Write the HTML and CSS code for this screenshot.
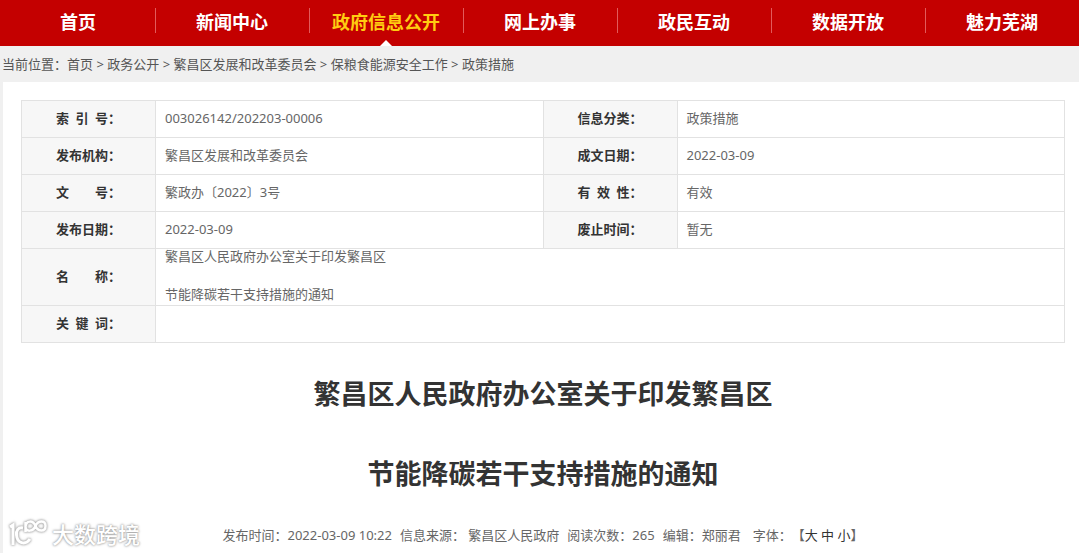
FILE: index.html
```html
<!DOCTYPE html>
<html lang="zh-CN">
<head>
<meta charset="utf-8">
<title>繁昌区人民政府办公室关于印发繁昌区节能降碳若干支持措施的通知</title>
<link rel="stylesheet" href="styles.css">
</head>
<body>
<nav class="nav">
  <a class="nav-item" href="#">首页</a>
  <a class="nav-item" href="#">新闻中心</a>
  <a class="nav-item active" href="#">政府信息公开</a>
  <a class="nav-item" href="#">网上办事</a>
  <a class="nav-item" href="#">政民互动</a>
  <a class="nav-item" href="#">数据开放</a>
  <a class="nav-item" href="#">魅力芜湖</a>
</nav>
<div class="crumbs">当前位置：<a href="#">首页</a> &gt; <a href="#">政务公开</a> &gt; <a href="#">繁昌区发展和改革委员会</a> &gt; <a href="#">保粮食能源安全工作</a> &gt; <a href="#">政策措施</a></div>
<main class="content">
  <table class="info">
    <colgroup><col class="col-label"><col><col class="col-label"><col></colgroup>
    <tr>
      <th scope="row"><span class="label">索 引 号</span>：</th><td>003026142/202203-00006</td>
      <th scope="row"><span class="label">信息分类</span>：</th><td>政策措施</td>
    </tr>
    <tr>
      <th scope="row"><span class="label">发布机构</span>：</th><td>繁昌区发展和改革委员会</td>
      <th scope="row"><span class="label">成文日期</span>：</th><td>2022-03-09</td>
    </tr>
    <tr>
      <th scope="row"><span class="label">文 号</span>：</th><td>繁政办〔2022〕3号</td>
      <th scope="row"><span class="label">有 效 性</span>：</th><td>有效</td>
    </tr>
    <tr>
      <th scope="row"><span class="label">发布日期</span>：</th><td>2022-03-09</td>
      <th scope="row"><span class="label">废止时间</span>：</th><td>暂无</td>
    </tr>
    <tr>
      <th scope="row"><span class="label">名 称</span>：</th>
      <td colspan="3"><div class="doc-name"><span>繁昌区人民政府办公室关于印发繁昌区</span><span>节能降碳若干支持措施的通知</span></div></td>
    </tr>
    <tr>
      <th scope="row"><span class="label">关 键 词</span>：</th><td colspan="3"></td>
    </tr>
  </table>
  <h1 class="title">繁昌区人民政府办公室关于印发繁昌区<br>节能降碳若干支持措施的通知</h1>
  <div class="meta">
    <span>发布时间：2022-03-09 10:22</span>
    <span>信息来源： 繁昌区人民政府</span>
    <span>阅读次数：265</span>
    <span>编辑：郑丽君</span>
    <span class="font-size">字体：【<a href="#">大</a> <a href="#">中</a> <a href="#">小</a>】</span>
  </div>
</main>
<div class="watermark">
  <svg class="watermark-logo" width="40" height="30" viewBox="0 0 40 30" fill="none" stroke="#fff" stroke-width="3" aria-hidden="true">
    <path d="M2 8 L5 6 V26"/>
    <path d="M15 9 C10 8 8 12 8.500 16 C9 24 17 27 22 20"/>
    <path d="M17.500 3 V13 M17.500 8 C18 1 25 1 27.500 7 C30 13 37.500 13 37.500 7 C37.500 1 30 1 27.500 7 C25 13 18 13 17.500 8" stroke-width="2.500"/>
  </svg>
  <span>大数跨境</span>
</div>
</body>
</html>
```
FILE: styles.css
```css
* {
  box-sizing: border-box;
}

body {
  margin: 0;
  background: #f0f0f0;
  color: #666;
  font: 13px/18px "Noto Sans", "Noto Sans CJK SC", sans-serif;
  text-spacing-trim: space-all;
}

a {
  color: inherit;
  text-decoration: none;
}

/* Main navigation */
.nav {
  display: flex;
  padding-left: 1px;
  background: #c40000;
}

.nav-item {
  position: relative;
  flex: 1;
  padding-bottom: 2px;
  color: #fff;
  font-size: 18px;
  font-weight: bold;
  line-height: 44px;
  text-align: center;
  white-space: nowrap;
}

.nav-item + .nav-item::before {
  content: "";
  position: absolute;
  top: 8px;
  left: 0;
  width: 1px;
  height: 25px;
  background: #e25a5a;
}

.nav-item.active {
  color: #fc1;
}

.nav-item.active::after {
  content: "";
  position: absolute;
  bottom: 0;
  left: 50%;
  margin-left: -6px;
  border: 6px solid transparent;
  border-top: 0;
  border-bottom-color: #fff;
}

.crumbs {
  padding: 0 2px;
  color: #555;
  line-height: 36px;
}

.content {
  min-height: calc(100vh - 82px);
  margin-left: 3px;
  padding: 18px 14px 8px 18px;
  background: #fff;
}

/* Document index table */
.info {
  width: 100%;
  border-collapse: collapse;
  table-layout: fixed;
}

.col-label {
  width: 134px;
}

.info th,
.info td {
  height: 37px;
  padding: 0 9px 2px;
  border: 1px solid #e2e2e2;
  text-align: left;
}

.info th {
  padding: 0 0 2px;
  background: #f7f7f7;
  color: #333;
  text-align: center;
}

.label {
  display: inline-block;
  width: 52px;
  text-align-last: justify;
}

.doc-name {
  display: grid;
  row-gap: 20px;
  margin-top: -2px;
}

.title {
  margin: 11px 0 12px;
  color: #333;
  font-size: 27px;
  line-height: 80px;
  text-align: center;
}

.meta {
  display: flex;
  justify-content: center;
  column-gap: 8px;
}

.font-size {
  padding-left: 4px;
}

.font-size a {
  color: #333;
}

.watermark {
  position: absolute;
  bottom: 4px;
  left: 8px;
  display: flex;
  align-items: center;
  gap: 4px;
  color: #fff;
  font-size: 22px;
  font-weight: 500;
  line-height: 30px;
  text-shadow: 0 0 2px #999, 0 0 3px #aaa;
}

.watermark-logo {
  filter: drop-shadow(0 0 1px #aaa) drop-shadow(0 0 1px #bbb);
}
```
